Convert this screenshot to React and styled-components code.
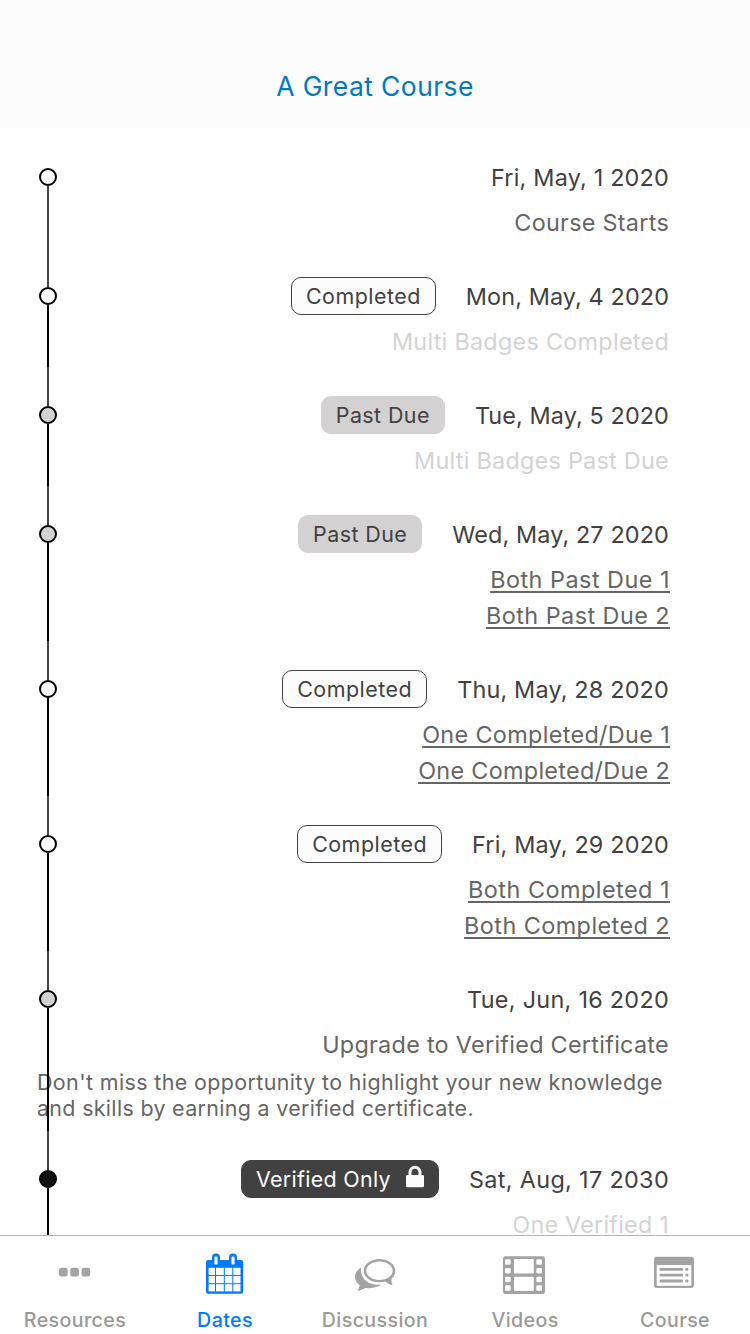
import React from "react";
import styled, { createGlobalStyle } from "styled-components";

const Global = createGlobalStyle`
  * { box-sizing: border-box; }
  body { margin: 0; background: #fff; }
`;

const Screen = styled.div`
  width: 750px;
  height: 1334px;
  display: flex;
  flex-direction: column;
  overflow: hidden;
  background: #fff;
  font-family: Inter, "Liberation Sans", sans-serif;
`;

const Header = styled.header`
  height: 128px;
  flex: none;
  padding-top: 45px;
  background: #fcfcfc;
  color: #0079bc;
  font-size: 26.5px;
  line-height: 82px;
  letter-spacing: 0.4px;
  text-align: center;
`;

const Timeline = styled.main`
  flex: 1;
  min-height: 0;
  overflow: hidden;
  padding-top: 1px;
`;

const Item = styled.section`
  display: grid;
`;

const Rail = styled.div`
  grid-area: 1 / 1;
  z-index: 1;
  width: 18px;
  margin-left: 39px;
  display: flex;
  flex-direction: column;
  align-items: center;
`;

const Segment = styled.div`
  width: 2px;
  background: ${(p) => p.$color};
  ${(p) => (p.$height ? `height: ${p.$height}px;` : "flex: 1;")}
`;

const Dot = styled.div`
  width: 18px;
  height: 18px;
  border: 2px solid #000;
  border-radius: 50%;
  background: ${(p) => p.$fill};
`;

const Content = styled.div`
  grid-area: 1 / 1;
  padding: 29px 80px 7px 37px;
  display: flex;
  flex-direction: column;
  align-items: flex-end;
  color: #656565;
`;

const DateRow = styled.div`
  height: 38px;
  margin-bottom: 9px;
  padding-right: 1px;
  display: flex;
  align-items: center;
  gap: 30px;
`;

const DateText = styled.span`
  font-size: 23.4px;
  letter-spacing: ${(p) => p.$tracking}px;
  color: #414141;
  white-space: nowrap;
`;

const badgeLooks = {
  Completed: "background: #fcfcfc; border-color: #414141; color: #414141; letter-spacing: 0.49px;",
  "Past Due": "background: #d3d1d1; border-color: #d3d1d1; color: #414141; letter-spacing: 0.42px;",
  "Verified Only": "background: #414141; border-color: #414141; color: #fcfcfc; letter-spacing: 0.3px;",
};

const Badge = styled.span`
  height: 38px;
  padding: 0 14px;
  display: flex;
  align-items: center;
  gap: 15px;
  border: 1px solid;
  border-radius: 10px;
  font-size: 21.45px;
  white-space: nowrap;
  ${(p) => badgeLooks[p.$kind]}
`;

const Title = styled.div`
  height: 36px;
  font-size: 23.4px;
  line-height: 36px;
  letter-spacing: ${(p) => p.$tracking}px;
  color: ${(p) => (p.$muted ? "#d3d3d3" : "#656565")};
  ${(p) =>
    p.$link
      ? "text-decoration: underline; text-decoration-thickness: 2px; text-underline-offset: 3px; text-decoration-skip-ink: none;"
      : "padding-right: 1px;"}
`;

const Description = styled.p`
  width: 633px;
  margin: 6px 0 3px;
  font-size: 21.45px;
  line-height: 26px;
`;

const DescriptionLine = styled.span`
  display: block;
  letter-spacing: ${(p) => p.$tracking}px;
  white-space: nowrap;
`;

const TabBar = styled.nav`
  flex: none;
  height: 99px;
  border-top: 1px solid #b2b2b2;
  display: grid;
  grid-template-columns: repeat(5, 1fr);
`;

const Tab = styled.div`
  padding-top: 16px;
  display: flex;
  flex-direction: column;
  align-items: center;
  gap: 12px;
  color: ${(p) => (p.$active ? "#007aff" : "#999")};
  font-size: 19.6px;
  font-weight: 500;
  line-height: 24px;
  letter-spacing: 0.4px;
`;

const Lock = styled.svg`
  width: 18px;
  height: 24px;
  margin-bottom: 4px;
`;

const LockIcon = () => (
  <Lock viewBox="0 0 18 24" fill="none">
    <path d="M4 11V7.500a5 5.300 0 0 1 10 0V11" stroke="#fcfcfc" strokeWidth="3" />
    <rect y="10" width="18" height="12.300" rx="1.300" fill="#fcfcfc" />
  </Lock>
);

const Icon = ({ children }) => (
  <svg width="46" height="44" viewBox="0 0 46 44" fill="#a3a3a3">{children}</svg>
);

const ResourcesIcon = () => (
  <Icon>
    {[7, 18.3, 29.6].map((x) => <rect key={x} x={x} y="15.7" width="8.6" height="8.8" rx="2.3" />)}
  </Icon>
);

const DatesIcon = () => (
  <Icon>
    <g fill="#007aff">
      <rect x="4" y="8" width="37.2" height="33.8" rx="2.2" />
      <rect x="10" y="1.6" width="8" height="12" rx="3.8" />
      <rect x="27" y="1.6" width="8" height="12" rx="3.8" />
    </g>
    <g fill="#fff">
      <rect x="12.4" y="4.6" width="3.2" height="8" rx="1.2" />
      <rect x="29.4" y="4.6" width="3.2" height="8" rx="1.2" />
      {[6.6, 14, 22.8, 31.3].map((x, i) =>
        [15.8, 24, 32.2].map((y) => (
          <rect key={`${x}-${y}`} x={x} y={y} width={[6.4, 7.8, 7.5, 7.2][i]} height="7.2" />
        ))
      )}
    </g>
  </Icon>
);

const DiscussionIcon = () => (
  <Icon>
    <path d="M9.2 15.6C5 18 3 21.5 3 24.8c0 3.3 1.6 6.2 4.6 8.4L6 39.2l7.6-3.2c5.4.5 11-.4 15.8-3.3-4 .4-8.2.1-12.2-1.6-5.6-2.7-8.8-8.6-8-15.5Z" />
    <path d="M27.5 7C18.8 7 11.7 12.2 11.7 18.7S18.8 30.3 27.5 30.3c2 0 4-.3 5.800-.8 2.200 2 4.400 3.300 7.300 3.600-.9-1.600-1.300-3.500-1.200-6 2.500-2.200 3.900-5.100 3.900-8.400C43.300 12.200 36.200 7 27.500 7Zm0 2.400c7.300 0 13.200 4.200 13.200 9.300s-5.900 9.200-13.200 9.200-13.200-4.100-13.200-9.200S20.200 9.400 27.500 9.400Z" fillRule="evenodd" />
  </Icon>
);

const VideosIcon = () => (
  <Icon>
    <rect x="1" y="4.3" width="42" height="37.7" rx="2.2" />
    <g fill="#fff">
      {[7.3, 16, 24.7, 33.3].map((y) => (
        <React.Fragment key={y}>
          <rect x="3" y={y} width="5.7" height="5.5" rx="1.4" />
          <rect x="34.3" y={y} width="5.7" height="5.5" rx="1.4" />
        </React.Fragment>
      ))}
      <rect x="12" y="7" width="19.8" height="14.4" rx="1" />
      <rect x="12" y="24.7" width="19.8" height="14.4" rx="1" />
    </g>
  </Icon>
);

const CourseIcon = () => (
  <Icon>
    <rect x="2" y="4.7" width="40" height="31.3" rx="3" />
    <rect x="4.7" y="13" width="34.6" height="20.7" rx="0.8" fill="#fff" />
    {[16, 21.8, 27.6].map((y) => (
      <React.Fragment key={y}>
        <rect x="7.6" y={y} width="23.4" height="2.8" rx="0.6" />
        <rect x="33.2" y={y} width="3.2" height="2.8" rx="1" />
      </React.Fragment>
    ))}
  </Icon>
);

// Titles and description lines are [text, letter spacing]; `tracking` is the date's letter spacing.
const items = [
  { date: "Fri, May, 1 2020", tracking: 0.2, fill: "#fcfcfc", titles: [["Course Starts", 0.27]], first: true },
  { date: "Mon, May, 4 2020", tracking: 0.11, fill: "#fcfcfc", badge: "Completed", titles: [["Multi Badges Completed", 0.27]], muted: true },
  { date: "Tue, May, 5 2020", tracking: 0.11, fill: "#d3d1d1", badge: "Past Due", titles: [["Multi Badges Past Due", 0.26]], muted: true },
  { date: "Wed, May, 27 2020", tracking: 0.13, fill: "#d3d1d1", badge: "Past Due", titles: [["Both Past Due 1", 0.49], ["Both Past Due 2", 0.45]], link: true },
  { date: "Thu, May, 28 2020", tracking: 0.18, fill: "#fcfcfc", badge: "Completed", titles: [["One Completed/Due 1", 0.34], ["One Completed/Due 2", 0.3]], link: true },
  { date: "Fri, May, 29 2020", tracking: 0.17, fill: "#fcfcfc", badge: "Completed", titles: [["Both Completed 1", 0.49], ["Both Completed 2", 0.44]], link: true },
  {
    date: "Tue, Jun, 16 2020", tracking: 0.28, fill: "#d3d1d1", titles: [["Upgrade to Verified Certificate", 0.28]],
    lines: [
      ["Don't miss the opportunity to highlight your new knowledge", 0.38],
      ["and skills by earning a verified certificate.", 0.32],
    ],
  },
  { date: "Sat, Aug, 17 2030", tracking: 0.34, fill: "#121212", badge: "Verified Only", titles: [["One Verified 1", 0.21]], muted: true },
];

const tabs = [
  ["Resources", ResourcesIcon],
  ["Dates", DatesIcon],
  ["Discussion", DiscussionIcon],
  ["Videos", VideosIcon],
  ["Course", CourseIcon],
];

export default function App() {
  return (
    <Screen>
      <Global />
      <Header>A Great Course</Header>
      <Timeline>
        {items.map((item) => (
          <Item key={item.date}>
            <Rail>
              <Segment $color={item.first ? "transparent" : "#444"} $height={39} />
              <Dot $fill={item.fill} />
              <Segment $color={item.first ? "#444" : "#000"} />
            </Rail>
            <Content>
              <DateRow>
                {item.badge && (
                  <Badge $kind={item.badge}>
                    {item.badge}
                    {item.badge === "Verified Only" && <LockIcon />}
                  </Badge>
                )}
                <DateText $tracking={item.tracking}>{item.date}</DateText>
              </DateRow>
              {item.titles.map(([title, tracking]) => (
                <Title key={title} $tracking={tracking} $muted={item.muted} $link={item.link}>{title}</Title>
              ))}
              {item.lines && (
                <Description>
                  {item.lines.map(([line, tracking]) => (
                    <DescriptionLine key={line} $tracking={tracking}>{line}</DescriptionLine>
                  ))}
                </Description>
              )}
            </Content>
          </Item>
        ))}
      </Timeline>
      <TabBar>
        {tabs.map(([label, Glyph]) => (
          <Tab key={label} $active={label === "Dates"}>
            <Glyph />
            {label}
          </Tab>
        ))}
      </TabBar>
    </Screen>
  );
}
